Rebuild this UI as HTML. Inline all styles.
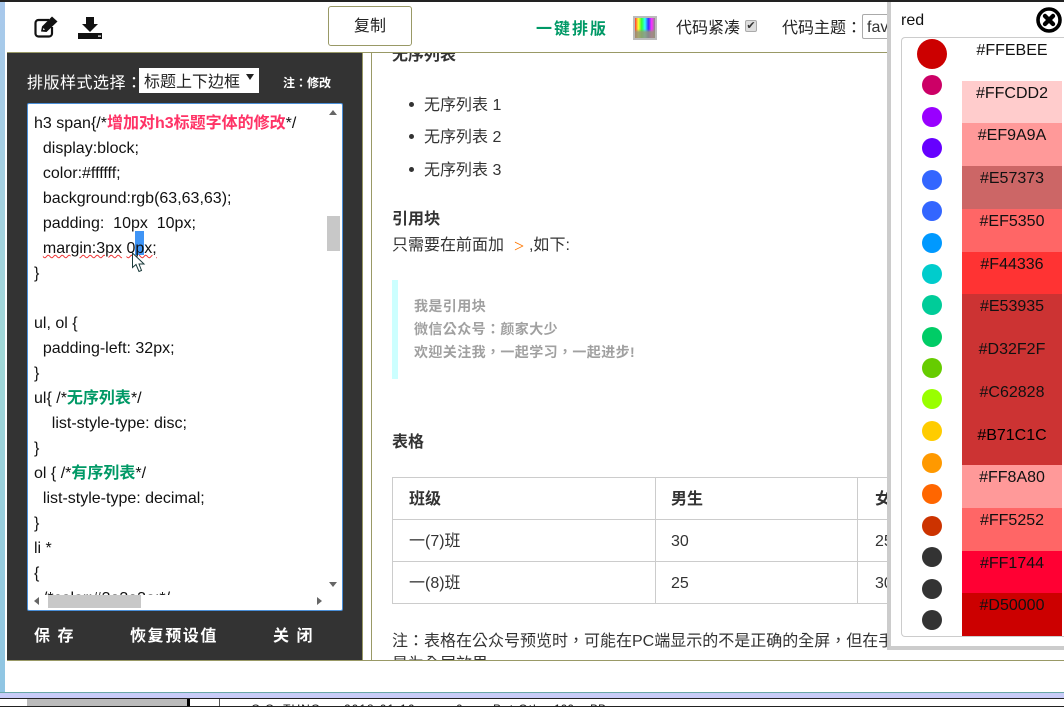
<!DOCTYPE html>
<html lang="zh-TW"><head><meta charset="utf-8"><title>排版</title>
<style>
*{box-sizing:border-box}
html,body{margin:0;padding:0;width:1064px;height:707px;overflow:hidden;background:#fff}
body{position:relative;font-family:"Liberation Sans","Noto Sans CJK TC",sans-serif;font-size:16px;color:#333}
.a{position:absolute}
.t{position:absolute;white-space:nowrap;line-height:24px;height:24px;margin-top:2px}
.b{font-weight:bold}
.code .t{color:#111;left:5px}
.sw{position:absolute;left:962px;width:100px;text-align:center;font-size:16px;line-height:24px;color:#111;padding-top:1px}
.c{position:absolute;border-radius:50%;width:20px;height:20px;left:922px}
.ln{position:absolute;background:#ccc}
.cell{position:absolute;white-space:nowrap;line-height:24px;color:#333;margin-top:1px}
</style></head><body>

<!-- outer desktop -->
<div class="a" style="left:0;top:0;width:5px;height:707px;background:linear-gradient(180deg,#a8c8ec,#a0d8d8 50%,#8fc4e4)"></div>
<div class="a" style="left:0;top:0;width:1064px;height:2px;background:#222"></div>
<div class="a" style="left:0;top:692px;width:1064px;height:6px;background:#c8ccf8;border-top:1px solid #6aa8a8"></div>
<div class="a" style="left:0;top:698px;width:1064px;height:9px;background:#fff;overflow:hidden;border-top:1px solid #222">
  <div class="a" style="left:27px;top:0;width:160px;height:8px;background:#bbb"></div>
  <div class="a" style="left:187px;top:0;width:3px;height:8px;background:#000"></div>
  <div class="a" style="left:219px;top:0;width:1px;height:8px;background:#555"></div>
  <div class="a" style="left:251px;top:3px;font-size:12px;line-height:14px;color:#222;white-space:nowrap;letter-spacing:1px">C.C. TUNG</div>
  <div class="a" style="left:344px;top:3px;font-size:12px;line-height:14px;color:#222;white-space:nowrap;letter-spacing:1px">2018-01-16</div>
  <div class="a" style="left:456px;top:3px;font-size:12px;line-height:14px;color:#222">0</div>
  <div class="a" style="left:493px;top:3px;font-size:12px;line-height:14px;color:#222;white-space:nowrap;letter-spacing:1px">Pet Other</div>
  <div class="a" style="left:554px;top:3px;font-size:12px;line-height:14px;color:#222">100</div>
  <div class="a" style="left:590px;top:3px;font-size:12px;line-height:14px;color:#222">BB</div>
  <div class="a" style="left:0;top:7px;width:1064px;height:1px;background:#222"></div>
</div>

<!-- window -->
<div class="a" style="left:6px;top:2px;width:1058px;height:690px;background:#fff"></div>
<div class="a" style="left:7px;top:52px;width:1057px;height:1px;background:#999966"></div>

<!-- toolbar icons -->
<svg class="a" style="left:34px;top:15px" width="26" height="24" viewBox="0 0 26 24">
  <path d="M15 5H4.5A3 3 0 0 0 1.5 8V18.5A3 3 0 0 0 4.5 21.5H15A3 3 0 0 0 18 18.5V12" fill="none" stroke="#111" stroke-width="2.2"/>
  <path d="M7 16.5L8 11.5L18 1.5L23.5 6.5L12.5 17Z" fill="#111"/>
  <path d="M9 15L9.4 13L11 14.6Z" fill="#fff"/>
</svg>
<svg class="a" style="left:78px;top:15px" width="24" height="25" viewBox="0 0 24 25">
  <path d="M8 2H16V9H20L12 17L4 9H8Z" fill="#111"/>
  <rect x="0" y="18" width="24" height="6" fill="#111"/>
  <rect x="20" y="20.5" width="3" height="1.2" fill="#fff"/>
</svg>

<div class="a" style="left:328px;top:6px;width:84px;height:40px;border:1px solid #999966;border-radius:3px;text-align:center;line-height:39px;color:#222;font-size:16px">复制</div>
<div class="t b" style="left:536px;top:16px;color:#009966;font-size:16px;letter-spacing:2px">一键排版</div>
<div class="a" style="left:633px;top:16px;width:24px;height:24px;border:2px solid #bbb;background:linear-gradient(180deg,rgba(255,255,255,0) 55%,rgba(150,150,120,.85) 70%),linear-gradient(90deg,#f33,#ff3,#3f3,#3ff,#33f,#f3f,#888)"></div>
<div class="t" style="left:676px;top:15px;color:#222">代码紧凑</div>
<div class="a" style="left:745px;top:20px;width:12px;height:12px;background:#ddd;border:1px solid #aaa;border-radius:2px;color:#333;font-size:11px;line-height:10px;text-align:center">✔</div>
<div class="t" style="left:782px;top:15px;color:#222">代码主题：</div>
<div class="a" style="left:862px;top:14px;width:40px;height:25px;border:1px solid #aaa;border-radius:2px;padding-left:4px;line-height:25px;color:#333;white-space:nowrap;overflow:hidden">favorite</div>

<!-- left panel -->
<div class="a" style="left:7px;top:53px;width:355px;height:607px;background:#333"></div>
<div class="a" style="left:362px;top:53px;width:1px;height:607px;background:#999966"></div>
<div class="a" style="left:371px;top:53px;width:1px;height:607px;background:#999966"></div>
<div class="t" style="left:27px;top:70px;color:#fff;letter-spacing:.5px">排版样式选择：</div>
<div class="a" style="left:139px;top:68px;width:120px;height:25px;background:#fff"></div>
<div class="a" style="left:144px;top:70px;color:#222;line-height:25px;white-space:nowrap">标题上下边框</div>
<div class="a" style="left:246px;top:74px;width:0;height:0;border-left:4px solid transparent;border-right:4px solid transparent;border-top:6px solid #222"></div>
<div class="t b" style="left:283px;top:69px;color:#fff;font-size:12px">注：修改</div>

<!-- editor -->
<div class="a" style="left:27px;top:103px;width:316px;height:508px;background:#fff;border:1px solid #4a8fd8;border-radius:2px;overflow:hidden">
 <div class="a code" style="left:1px;top:1px;width:312px;height:504px">
  <div class="a" style="left:0;top:0;width:312px;height:490px;overflow:hidden">
    <div class="a" style="left:106px;top:126px;width:9px;height:24px;background:#3f94f5"></div>
    <div class="t" style="top:5px">h3 span{/*<b style="color:#ff3366">增加对h3标题字体的修改</b>*/</div>
    <div class="t" style="top:30px">&nbsp;&nbsp;display:block;</div>
    <div class="t" style="top:55px">&nbsp;&nbsp;color:#ffffff;</div>
    <div class="t" style="top:80px">&nbsp;&nbsp;background:rgb(63,63,63);</div>
    <div class="t" style="top:105px">&nbsp;&nbsp;padding:&nbsp; 10px&nbsp; 10px;</div>
    <div class="t" style="top:130px">&nbsp;&nbsp;<span style="text-decoration:underline wavy #e33;text-decoration-thickness:1px">margin:3px</span> <span style="text-decoration:underline wavy #e33;text-decoration-thickness:1px">0px;</span></div>
    <div class="t" style="top:155px">}</div>
    <div class="t" style="top:205px">ul, ol {</div>
    <div class="t" style="top:230px">&nbsp;&nbsp;padding-left: 32px;</div>
    <div class="t" style="top:255px">}</div>
    <div class="t" style="top:280px">ul{ /*<b style="color:#009966">无序列表</b>*/</div>
    <div class="t" style="top:305px">&nbsp;&nbsp;&nbsp;&nbsp;list-style-type: disc;</div>
    <div class="t" style="top:330px">}</div>
    <div class="t" style="top:355px">ol { /*<b style="color:#009966">有序列表</b>*/</div>
    <div class="t" style="top:380px">&nbsp;&nbsp;list-style-type: decimal;</div>
    <div class="t" style="top:405px">}</div>
    <div class="t" style="top:430px">li *</div>
    <div class="t" style="top:455px">{</div>
    <div class="t" style="top:480px">&nbsp;&nbsp;/*color:#3a3a3a;*/</div>
  </div>
  <!-- v scrollbar -->
  <div class="a" style="left:298px;top:111px;width:13px;height:35px;background:#c8c8c8"></div>
  <div class="a" style="left:300px;top:5px;border-left:4px solid transparent;border-right:4px solid transparent;border-bottom:5px solid #666"></div>
  <div class="a" style="left:300px;top:477px;border-left:4px solid transparent;border-right:4px solid transparent;border-top:5px solid #666"></div>
  <!-- h scrollbar -->
  <div class="a" style="left:0;top:490px;width:312px;height:14px;background:#fff"></div>
  <div class="a" style="left:19px;top:490px;width:93px;height:13px;background:#c8c8c8"></div>
  <div class="a" style="left:5px;top:492px;border-top:4px solid transparent;border-bottom:4px solid transparent;border-right:5px solid #666"></div>
  <div class="a" style="left:288px;top:492px;border-top:4px solid transparent;border-bottom:4px solid transparent;border-left:5px solid #666"></div>
 </div>
</div>
<!-- cursor -->
<svg class="a" style="left:131px;top:252px" width="15" height="21" viewBox="0 0 15 21">
  <path d="M1.5 1V15.5L5 12.5L8 19.5L10.5 18.5L8 12H13Z" fill="#fff" stroke="#1a3a3a" stroke-width="1"/>
</svg>

<div class="t b" style="left:34px;top:623px;color:#fff;letter-spacing:1.5px">保 存</div>
<div class="t b" style="left:130px;top:623px;color:#fff;letter-spacing:1.6px">恢复预设值</div>
<div class="t b" style="left:273px;top:623px;color:#fff;letter-spacing:1.5px">关 闭</div>

<!-- right content -->
<div class="a" style="left:372px;top:53px;width:515px;height:607px;overflow:hidden;background:#fff">
  <div class="t b" style="left:20px;top:-11px;color:#333">无序列表</div>
  <div class="a" style="left:37px;top:49px;width:5px;height:5px;border-radius:50%;background:#333"></div>
  <div class="t" style="left:52px;top:39px">无序列表 1</div>
  <div class="a" style="left:37px;top:81px;width:5px;height:5px;border-radius:50%;background:#333"></div>
  <div class="t" style="left:52px;top:71px">无序列表 2</div>
  <div class="a" style="left:37px;top:114px;width:5px;height:5px;border-radius:50%;background:#333"></div>
  <div class="t" style="left:52px;top:104px">无序列表 3</div>
  <div class="t b" style="left:20px;top:153px">引用块</div>
  <div class="t" style="left:20px;top:179px">只需要在前面加</div>
  <div class="t" style="left:142px;top:179px;color:#ff7700;font-size:18px;font-family:'Liberation Serif',serif">&gt;</div>
  <div class="t" style="left:157px;top:179px">,如下:</div>
  <div class="a" style="left:20px;top:227px;width:6px;height:99px;background:#ccffff"></div>
  <div class="t b" style="left:42px;top:239px;font-size:14px;color:#a0a0a0;letter-spacing:.4px">我是引用块</div>
  <div class="t b" style="left:42px;top:262px;font-size:14px;color:#a0a0a0;letter-spacing:.4px">微信公众号：颜家大少</div>
  <div class="t b" style="left:42px;top:285px;font-size:14px;color:#a0a0a0;letter-spacing:.4px">欢迎关注我，一起学习，一起进步!</div>
  <div class="t b" style="left:20px;top:376px">表格</div>
  <!-- table -->
  <div class="ln" style="left:20px;top:424px;width:500px;height:1px"></div>
  <div class="ln" style="left:20px;top:466px;width:500px;height:1px"></div>
  <div class="ln" style="left:20px;top:508px;width:500px;height:1px"></div>
  <div class="ln" style="left:20px;top:550px;width:500px;height:1px"></div>
  <div class="ln" style="left:20px;top:424px;width:1px;height:127px"></div>
  <div class="ln" style="left:283px;top:424px;width:1px;height:127px"></div>
  <div class="ln" style="left:485px;top:424px;width:1px;height:127px"></div>
  <div class="cell b" style="left:37px;top:434px">班级</div>
  <div class="cell b" style="left:299px;top:434px">男生</div>
  <div class="cell b" style="left:503px;top:434px">女生</div>
  <div class="cell" style="left:37px;top:476px">一(7)班</div>
  <div class="cell" style="left:299px;top:476px">30</div>
  <div class="cell" style="left:503px;top:476px">25</div>
  <div class="cell" style="left:37px;top:518px">一(8)班</div>
  <div class="cell" style="left:299px;top:518px">25</div>
  <div class="cell" style="left:503px;top:518px">30</div>
  <div class="t" style="left:20px;top:575px">注：表格在公众号预览时，可能在PC端显示的不是正确的全屏，但在手机上预览时</div>
  <div class="t" style="left:20px;top:598px">是为全屏效果。</div>
</div>

<!-- color panel -->
<div class="a" style="left:887px;top:2px;width:177px;height:648px;background:#fff;border-left:4px solid #ccc;border-bottom:4px solid #ccc"></div>
<div class="t" style="left:901px;top:7px;color:#111">red</div>
<svg class="a" style="left:1036px;top:7px" width="26" height="26" viewBox="0 0 26 26">
  <circle cx="13" cy="13" r="11" fill="#fff" stroke="#000" stroke-width="3.6"/>
  <path d="M9 9L17 17M17 9L9 17" stroke="#000" stroke-width="4.4" stroke-linecap="round"/>
</svg>
<div class="a" style="left:901px;top:37px;width:163px;height:600px;border:1px solid #ccc;border-right:none;border-radius:4px 0 0 4px"></div>

<div class="sw" style="top:38px;height:43px;background:#fff">#FFEBEE</div>
<div class="sw" style="top:81px;height:42px;background:#ffcccc">#FFCDD2</div>
<div class="sw" style="top:123px;height:43px;background:#ff9999">#EF9A9A</div>
<div class="sw" style="top:166px;height:43px;background:#cc6666">#E57373</div>
<div class="sw" style="top:209px;height:43px;background:#ff6666">#EF5350</div>
<div class="sw" style="top:252px;height:42px;background:#ff3333">#F44336</div>
<div class="sw" style="top:294px;height:43px;background:#cc3333">#E53935</div>
<div class="sw" style="top:337px;height:43px;background:#cc3333">#D32F2F</div>
<div class="sw" style="top:380px;height:43px;background:#cc3333">#C62828</div>
<div class="sw" style="top:423px;height:42px;background:#cc3333"><span style="font-weight:500;color:#000">#B71C1C</span></div>
<div class="sw" style="top:465px;height:43px;background:#ff9999">#FF8A80</div>
<div class="sw" style="top:508px;height:43px;background:#ff6666">#FF5252</div>
<div class="sw" style="top:551px;height:42px;background:#ff0033">#FF1744</div>
<div class="sw" style="top:593px;height:43px;background:#cc0000">#D50000</div>

<div class="c" style="left:917px;top:39px;width:30px;height:30px;background:#cc0000"></div>
<div class="c" style="top:75px;background:#cc0066"></div>
<div class="c" style="top:107px;background:#9900ff"></div>
<div class="c" style="top:138px;background:#6600ff"></div>
<div class="c" style="top:170px;background:#3366ff"></div>
<div class="c" style="top:201px;background:#3366ff"></div>
<div class="c" style="top:233px;background:#0099ff"></div>
<div class="c" style="top:264px;background:#00cccc"></div>
<div class="c" style="top:295px;background:#00cc99"></div>
<div class="c" style="top:327px;background:#00cc66"></div>
<div class="c" style="top:358px;background:#66cc00"></div>
<div class="c" style="top:389px;background:#99ff00"></div>
<div class="c" style="top:421px;background:#ffcc00"></div>
<div class="c" style="top:453px;background:#ff9900"></div>
<div class="c" style="top:484px;background:#ff6600"></div>
<div class="c" style="top:516px;background:#cc3300"></div>
<div class="c" style="top:547px;background:#333"></div>
<div class="c" style="top:579px;background:#333"></div>
<div class="c" style="top:610px;background:#333"></div>

<!-- lower olive line -->
<div class="a" style="left:7px;top:660px;width:1057px;height:1px;background:#999966"></div>
</body></html>
